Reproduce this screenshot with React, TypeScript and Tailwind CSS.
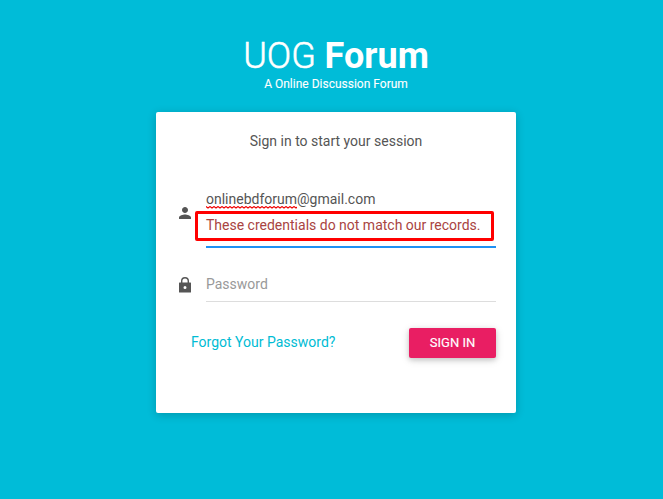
export default function App() {
  return (
    <main className="flex h-[499px] w-[663px] flex-col bg-[#00bcd8] pl-[156px] pt-[33px] font-['Roboto',sans-serif] text-[#555]">
      <header className="w-[360px] text-center text-white">
        <h1 className="h-[44px] pt-px text-[36px] leading-[44px] font-light"><span className="[-webkit-text-stroke:0.5px_white]">UOG</span> <b className="font-bold">Forum</b></h1>
        <p className="h-[35px] text-[12px] leading-[14px] [-webkit-text-stroke:0.1px_white]">A Online Discussion Forum</p>
      </header>
      <section className="h-[301px] w-[360px] rounded-[2px] bg-white px-5 shadow-[0_2px_10px_rgba(0,0,0,0.2)]">
        <p className="pt-[19px] text-center text-[14px] leading-5">Sign in to start your session</p>
        <form>
          <div className="mt-[32px] flex h-[65px]">
            <div className="w-[30px] pt-[21px]">
              <svg width="18" height="18" viewBox="0 0 24 24" fill="#555"><path d="M12 12c2.21 0 4-1.79 4-4s-1.79-4-4-4-4 1.79-4 4 1.79 4 4 4zm0 2c-2.67 0-8 1.34-8 4v2h16v-2c0-2.66-5.33-4-8-4z" /></svg>
            </div>
            <div className="relative w-[290px] border-b-2 border-[#1f91f3] pt-[6px] text-[14px] leading-5">
              <div>
                <span className="relative">
                  onlinebdforum
                  <svg className="absolute top-[15px] left-0 h-[3px] w-[91px]" viewBox="0 0 91 3" fill="none" stroke="#f00000" aria-hidden="true">
                    <defs>
                      <pattern id="spelling" width="4" height="3" patternUnits="userSpaceOnUse">
                        <path d="M-1 1.5L0 0.5L2 2L4 0.5L5 1.5" strokeWidth="1.1" />
                      </pattern>
                    </defs>
                    <rect width="91" height="3" fill="url(#spelling)" stroke="none" />
                  </svg>
                </span>@gmail.com
              </div>
              <p className="pt-[6px] text-[#a94442]">These credentials do not match our records.</p>
              <span className="absolute top-[28px] -left-[11px] h-[30px] w-[299px] rounded-[2px] border-[3px] border-[#ff0000]" />
            </div>
          </div>
          <div className="mt-[20px] flex h-[34px]">
            <div className="w-[30px] pt-[8px]">
              <svg width="18" height="18" viewBox="0 0 18 18" fill="#555">
                <path fillRule="evenodd" d="M3.5 6.5H5V5a4 4 0 0 1 8 0v1.5h1.5a.5.5 0 0 1 .5.5v9a.5.5 0 0 1-.5.5h-11A.5.5 0 0 1 3 16V7a.5.5 0 0 1 .5-.5zM6.4 6.5h5.2V5a2.6 2.6 0 0 0-5.2 0zM9 10a1.5 1.5 0 1 0 0 3 1.5 1.5 0 0 0 0-3z" />
              </svg>
            </div>
            <div className="w-[290px] border-b border-[#ddd] pt-[6px] text-[14px] leading-5 text-[#999]">Password</div>
          </div>
          <div className="mt-[26px] flex justify-between pl-[15px] text-[14px]">
            <a className="pt-[4px] leading-5 text-[#00bcd4]">Forgot Your Password?</a>
            <button type="button" className="h-[30px] w-[87px] rounded-[2px] bg-[#e91e63] text-[13px] text-white shadow-[0_2px_5px_rgba(0,0,0,0.16),0_2px_10px_rgba(0,0,0,0.12)] [-webkit-text-stroke:0.15px_white]">SIGN IN</button>
          </div>
        </form>
      </section>
    </main>
  );
}
